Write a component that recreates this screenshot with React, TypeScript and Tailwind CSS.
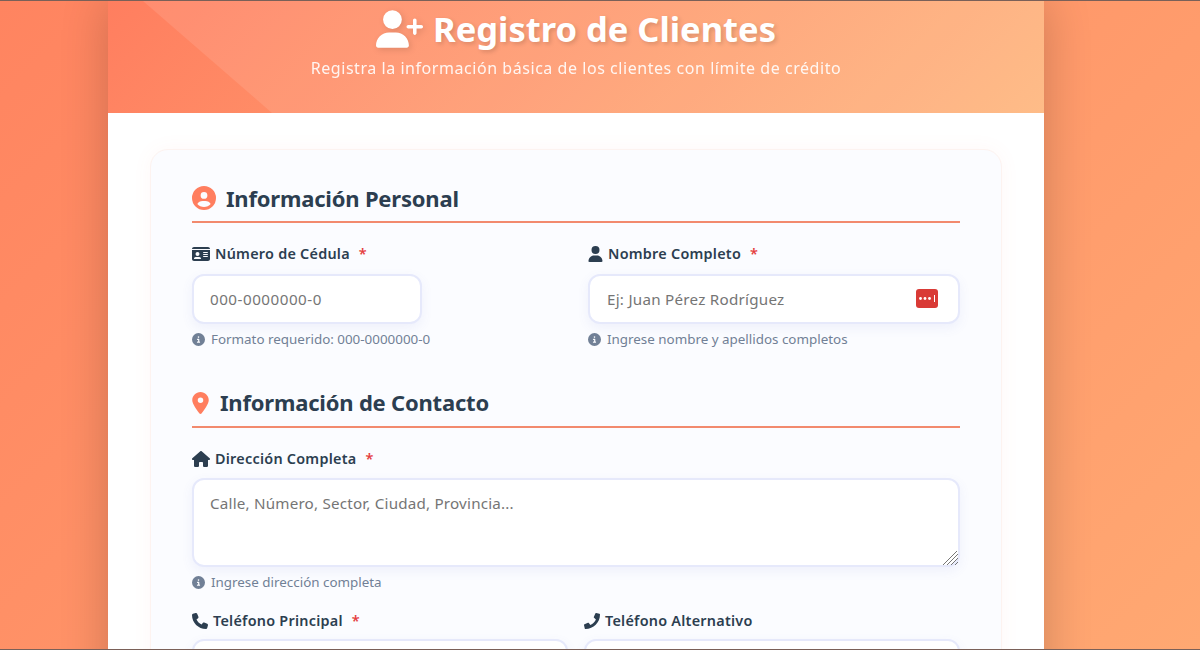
import { FaPhone } from "react-icons/fa";
import { FaUserPlus, FaCircleUser, FaIdCard, FaUser, FaLocationDot, FaHouse, FaPhone as FaPhone6, FaCircleInfo } from "react-icons/fa6";

const inputCls =
  "w-full h-[50px] rounded-[12px] border-2 border-[#e6e9fb] bg-white px-[16px] text-[15.2px] tracking-[0.2px] text-[#2c3e50] placeholder:text-[#757575] shadow-[0_4px_12px_rgba(90,100,200,0.08)] outline-none";

function Label({ icon, text, required }: { icon: React.ReactNode; text: string; required?: boolean }) {
  return (
    <div className="flex items-center gap-[5px] h-[20px] text-[14.4px] font-semibold tracking-[0.25px] text-[#2c3e50]">
      {icon}
      <span>{text}</span>
      {required && <span className="ml-[4px] text-[#e53e3e]">*</span>}
    </div>
  );
}

function Hint({ text }: { text: string }) {
  return (
    <div className="flex items-center gap-[6px] h-[18px] text-[13.4px] text-[#718096]">
      <FaCircleInfo className="text-[13px]" />
      <span>{text}</span>
    </div>
  );
}

function Section({ icon, text, gap, pad }: { icon: React.ReactNode; text: string; gap: string; pad: string }) {
  return (
    <div className={`flex items-center ${gap} ${pad} h-[50px] border-b-2 border-[#f28a6e] text-[22px] font-bold tracking-[-0.2px] text-[#2c3e50]`}>
      {icon}
      <span>{text}</span>
    </div>
  );
}

export default function App() {
  return (
    <div
      className="h-[650px] w-[1200px] overflow-hidden flex pl-[108px] border-y border-[#7a6058] bg-[linear-gradient(135deg,#ff8460_0%,#ffa872_100%)]"
      style={{ fontFamily: '"Noto Sans", sans-serif' }}
    >
      <div className="w-[936px] h-[1000px] shrink-0 bg-white shadow-[0_0_45px_rgba(0,0,0,0.2)]">
        <header className="relative h-[112px] overflow-hidden bg-[linear-gradient(135deg,#ff7e5f,#feb47b)] flex flex-col items-center text-white">
          <div className="absolute inset-0 bg-white/10 [clip-path:polygon(35px_0,100%_0,100%_100%,164px_100%)]" />
          <h1 className="relative mt-[5px] flex items-center gap-[10px] text-[34.5px] leading-[46px] font-bold [text-shadow:2px_2px_4px_rgba(0,0,0,0.15)]">
            <FaUserPlus className="w-[47px] h-[38px] [filter:drop-shadow(2px_2px_3px_rgba(0,0,0,0.12))]" />
            Registro de Clientes
          </h1>
          <p className="relative mt-[4px] text-[16px] leading-[24px] tracking-[0.55px] opacity-90">
            Registra la información básica de los clientes con límite de crédito
          </p>
        </header>

        <div className="px-[42px] pt-[36px]">
          <div className="rounded-[18px] border border-[#fdf3f0] bg-[#fbfcff] px-[41px] pt-[23px] h-[700px] shadow-[0_0_20px_rgba(255,126,95,0.05)]">
            <Section icon={<FaCircleUser className="text-[#ff7e5f] text-[24px]" />} text="Información Personal" gap="gap-[10px]" pad="pt-[2px]" />

            <div className="mt-[21px] grid grid-cols-[380px_372px] gap-x-[16px]">
              <div>
                <Label icon={<FaIdCard className="w-[18px] h-[16px]" />} text="Número de Cédula" required />
                <input className={`${inputCls} mt-[10px] !w-[230px] !tracking-[0.5px]`} placeholder="000-0000000-0" />
                <div className="mt-[6px]"><Hint text="Formato requerido: 000-0000000-0" /></div>
              </div>
              <div>
                <Label icon={<FaUser className="w-[15px] h-[16px]" />} text="Nombre Completo" required />
                <div className="relative mt-[10px]">
                  <input className={`${inputCls} !pl-[17px] !tracking-[0.25px]`} placeholder="Ej: Juan Pérez Rodríguez" />
                  <svg className="absolute right-[22px] top-[15px]" width="22" height="19" viewBox="0 0 22 19">
                    <rect width="22" height="19" rx="3" fill="#d93a36" />
                    <circle cx="4.5" cy="9.5" r="1.4" fill="#fff" />
                    <circle cx="9" cy="9.5" r="1.4" fill="#fff" />
                    <circle cx="13.5" cy="9.5" r="1.4" fill="#fff" />
                    <rect x="18" y="6" width="1" height="7" fill="#fff" />
                  </svg>
                </div>
                <div className="mt-[6px]"><Hint text="Ingrese nombre y apellidos completos" /></div>
              </div>
            </div>

            <div className="mt-[30px]">
              <Section icon={<FaLocationDot className="text-[#ff7e5f] w-[17px] h-[22px]" />} text="Información de Contacto" gap="gap-[11px]" pad="pt-[1px]" />
            </div>

            <div className="mt-[21px]">
              <Label icon={<FaHouse className="w-[18px] h-[16px]" />} text="Dirección Completa" required />
              <div className="relative mt-[9px]">
                <textarea
                  className={`${inputCls} !h-[89px] py-[12px] block resize-none`}
                  placeholder="Calle, Número, Sector, Ciudad, Provincia..."
                />
                <svg className="absolute right-[2px] bottom-[2px]" width="15" height="14" viewBox="0 0 15 14" stroke="#777" strokeWidth="1">
                  <path d="M0 14 L14 0 M4 14 L15 3 M8 14 L15 7 M12 14 L15 11" />
                </svg>
              </div>
              <div className="mt-[6px]"><Hint text="Ingrese dirección completa" /></div>
            </div>

            <div className="mt-[20px] grid grid-cols-2 gap-x-[16px]">
              <div>
                <Label icon={<FaPhone6 className="w-[16px] h-[16px]" />} text="Teléfono Principal" required />
                <input className={`${inputCls} mt-[8px]`} />
              </div>
              <div>
                <Label icon={<FaPhone className="w-[16px] h-[16px]" />} text="Teléfono Alternativo" />
                <input className={`${inputCls} mt-[8px]`} />
              </div>
            </div>
          </div>
        </div>
      </div>
    </div>
  );
}
